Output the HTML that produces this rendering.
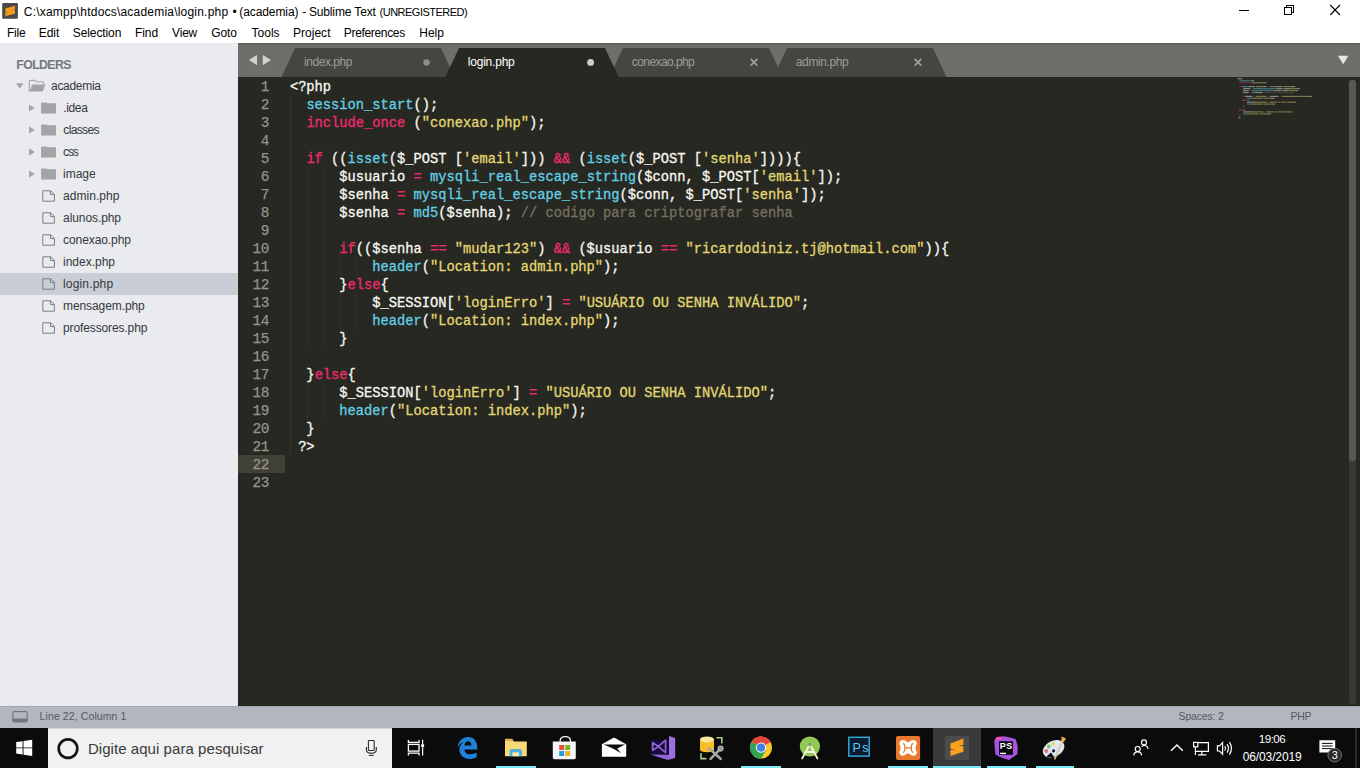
<!DOCTYPE html>
<html><head><meta charset="utf-8"><title>Sublime Text</title>
<style>
html,body{margin:0;padding:0;}
body{width:1360px;height:768px;overflow:hidden;position:relative;background:#ffffff;font-family:"Liberation Sans",sans-serif;}
.t{position:absolute;white-space:pre;}
.a{position:absolute;}
svg{position:absolute;overflow:visible;}

</style></head>
<body>
<div class="a" style="left:0;top:0;width:1360px;height:43px;background:#ffffff"></div>
<svg style="left:0;top:0" width="24" height="24" viewBox="0 0 24 24"><rect x="2.2" y="3.1" width="15.7" height="15.6" rx="0.8" fill="#4a4a48"/>
<path d="M15 5.7 L5.3 8.6 L5.3 11.7 L9.2 12.15 L5.3 12.6 L5.3 16.3 L15 13.4 L15 10.3 L11.2 9.85 L15 9.4 Z" fill="#f99c1c"/></svg>
<span class="t" style='left:23.82px;top:6px;font:400 12px/12px "Liberation Sans", sans-serif;color:#000000;letter-spacing:0.206px;'>C:\xampp\htdocs\academia\login.php</span>
<span class="t" style='left:232.40px;top:6px;font:400 12px/12px "Liberation Sans", sans-serif;color:#000000;letter-spacing:0.000px;'>•</span>
<span class="t" style='left:239.22px;top:6px;font:400 12px/12px "Liberation Sans", sans-serif;color:#000000;letter-spacing:-0.086px;'>(academia)</span>
<span class="t" style='left:302.30px;top:6px;font:400 12px/12px "Liberation Sans", sans-serif;color:#000000;letter-spacing:0.000px;'>-</span>
<span class="t" style='left:308.92px;top:6px;font:400 12px/12px "Liberation Sans", sans-serif;color:#000000;letter-spacing:-0.139px;'>Sublime Text</span>
<span class="t" style='left:379.56px;top:7px;font:400 11px/11px "Liberation Sans", sans-serif;color:#000000;letter-spacing:-0.504px;'>(UNREGISTERED)</span>
<svg style="left:1230px;top:0" width="130" height="24" viewBox="0 0 130 24" fill="none" stroke="#000" stroke-width="1">
<path shape-rendering="crispEdges" d="M9 10.5 H19"/>
<path shape-rendering="crispEdges" d="M54.5 7.5 h7 v7 h-7 Z M56.5 7.5 V5.5 h7 v7 h-2"/>
<path d="M100.2 5 L110 15 M110 5 L100.2 15" stroke-width="1.1"/>
</svg>
<span class="t" style='left:6.92px;top:27px;font:400 12px/12px "Liberation Sans", sans-serif;color:#000000;letter-spacing:-0.195px;'>File</span>
<span class="t" style='left:38.72px;top:27px;font:400 12px/12px "Liberation Sans", sans-serif;color:#000000;letter-spacing:-0.043px;'>Edit</span>
<span class="t" style='left:72.72px;top:27px;font:400 12px/12px "Liberation Sans", sans-serif;color:#000000;letter-spacing:-0.089px;'>Selection</span>
<span class="t" style='left:135.02px;top:27px;font:400 12px/12px "Liberation Sans", sans-serif;color:#000000;letter-spacing:-0.095px;'>Find</span>
<span class="t" style='left:172.12px;top:27px;font:400 12px/12px "Liberation Sans", sans-serif;color:#000000;letter-spacing:-0.212px;'>View</span>
<span class="t" style='left:211.32px;top:27px;font:400 12px/12px "Liberation Sans", sans-serif;color:#000000;letter-spacing:-0.119px;'>Goto</span>
<span class="t" style='left:251.62px;top:27px;font:400 12px/12px "Liberation Sans", sans-serif;color:#000000;letter-spacing:-0.014px;'>Tools</span>
<span class="t" style='left:293.02px;top:27px;font:400 12px/12px "Liberation Sans", sans-serif;color:#000000;letter-spacing:0.017px;'>Project</span>
<span class="t" style='left:343.82px;top:27px;font:400 12px/12px "Liberation Sans", sans-serif;color:#000000;letter-spacing:-0.334px;'>Preferences</span>
<span class="t" style='left:419.22px;top:27px;font:400 12px/12px "Liberation Sans", sans-serif;color:#000000;letter-spacing:0.024px;'>Help</span>
<div class="a" style="left:238px;top:43px;width:1122px;height:34px;background:#6e6f69"></div>
<div class="a" style="left:238px;top:43px;width:1122px;height:2px;background:#63645f"></div>
<svg style="left:238px;top:43px" width="1122" height="34" viewBox="0 0 1122 34">
<path d="M10.9 17 L19 11.9 L19 22.2 Z" fill="#d2d2ce"/>
<path d="M33 17 L24.8 11.9 L24.8 22.2 Z" fill="#d2d2ce"/>
<path d="M1100 12.8 L1110.4 12.8 L1105.2 21.2 Z" fill="#e6e6e4"/>

<path d="M43.5 34 L57 5 L203 5 L216.5 34 Z" fill="#454641"/>
<path d="M371.5 34 L385 5 L531 5 L544.5 34 Z" fill="#454641"/>
<path d="M535.5 34 L549 5 L695 5 L708.5 34 Z" fill="#454641"/>
<path d="M207.5 34 L221 5 L367 5 L380.5 34 Z" fill="#272822"/>
<circle cx="188.5" cy="19.4" r="3.2" fill="#8d8e8a"/>
<circle cx="352.6" cy="19.4" r="3.4" fill="#cfcfcb"/>
<path d="M512.7 16.0 L519.3 22.6 M519.3 16.0 L512.7 22.6" stroke="#9a9b97" stroke-width="1.8" fill="none"/>
<path d="M676.7 16.0 L683.3 22.6 M683.3 16.0 L676.7 22.6" stroke="#9a9b97" stroke-width="1.8" fill="none"/>
</svg>
<span class="t" style='left:304.02px;top:56px;font:400 12px/12px "Liberation Sans", sans-serif;color:#9c9d99;letter-spacing:-0.448px;'>index.php</span>
<span class="t" style='left:467.82px;top:56px;font:400 12px/12px "Liberation Sans", sans-serif;color:#ffffff;letter-spacing:-0.220px;'>login.php</span>
<span class="t" style='left:631.82px;top:56px;font:400 12px/12px "Liberation Sans", sans-serif;color:#9c9d99;letter-spacing:-0.577px;'>conexao.php</span>
<span class="t" style='left:795.82px;top:56px;font:400 12px/12px "Liberation Sans", sans-serif;color:#9c9d99;letter-spacing:-0.386px;'>admin.php</span>
<div class="a" style="left:0;top:706px;width:1360px;height:22px;background:#b2b6bf"></div>
<div class="a" style="left:0;top:706px;width:1360px;height:1px;background:#a4a8b1"></div>
<svg style="left:11px;top:710px" width="18" height="14" viewBox="0 0 18 14">
<rect x="1.8" y="1.6" width="14.4" height="10.4" rx="1.6" fill="none" stroke="#70747d" stroke-width="1.2"/>
<path d="M1.8 8.6 H16.2 V10.6 Q16.2 12 14.8 12 H3.2 Q1.8 12 1.8 10.6 Z" fill="#70747d"/></svg>
<span class="t" style='left:39.58px;top:711px;font:400 10.5px/10.5px "Liberation Sans", sans-serif;color:#555860;letter-spacing:0.100px;'>Line 22, Column 1</span>
<span class="t" style='left:1178.58px;top:711px;font:400 10.5px/10.5px "Liberation Sans", sans-serif;color:#555860;letter-spacing:-0.170px;'>Spaces: 2</span>
<span class="t" style='left:1290.58px;top:711px;font:400 10.5px/10.5px "Liberation Sans", sans-serif;color:#555860;letter-spacing:-0.377px;'>PHP</span>
<div class="a" style="left:0;top:43px;width:238px;height:663px;background:#e9ebef"></div>
<div class="a" style="left:0;top:273px;width:238px;height:22px;background:#c9cdd6"></div>
<span class="t" style='left:16.30px;top:59px;font:700 12.4px/12.4px "Liberation Sans", sans-serif;color:#74777e;letter-spacing:-0.669px;'>FOLDERS</span>
<svg style="left:0;top:43px" width="238" height="663" viewBox="0 43 238 663">
<path d="M16 83.2 L23.6 83.2 L19.8 88.8 Z" fill="#a2a4a7"/>
<path d="M29.3 91.4 V82 Q29.3 80.4 30.8 80.4 H34.6 L36 81.8 H42.4 Q43.6 81.8 43.6 83 V84" fill="none" stroke="#a2a4a7" stroke-width="1.1"/>
<path d="M29.6 91.6 L32.2 84.4 H45.4 L42.8 91.6 Z" fill="#a2a4a7"/>
<path d="M29 104.4 L34.9 108 L29 111.6 Z" fill="#a2a4a7"/><path d="M41.1 102.4 H46.4 L47.4 103.2 H56 V113.6 H41.1 Z" fill="#a2a4a7"/>
<path d="M29 126.4 L34.9 130 L29 133.6 Z" fill="#a2a4a7"/><path d="M41.1 124.4 H46.4 L47.4 125.2 H56 V135.6 H41.1 Z" fill="#a2a4a7"/>
<path d="M29 148.4 L34.9 152 L29 155.6 Z" fill="#a2a4a7"/><path d="M41.1 146.4 H46.4 L47.4 147.2 H56 V157.6 H41.1 Z" fill="#a2a4a7"/>
<path d="M29 170.4 L34.9 174 L29 177.6 Z" fill="#a2a4a7"/><path d="M41.1 168.4 H46.4 L47.4 169.2 H56 V179.6 H41.1 Z" fill="#a2a4a7"/>
<path d="M42.8 190.8 H50.6 L54.4 194.4 V201.2 H42.8 Z M50.4 190.8 V194.6 H54.4" fill="none" stroke="#7c7e82" stroke-width="1" stroke-linejoin="round"/>
<path d="M42.8 212.8 H50.6 L54.4 216.4 V223.2 H42.8 Z M50.4 212.8 V216.6 H54.4" fill="none" stroke="#7c7e82" stroke-width="1" stroke-linejoin="round"/>
<path d="M42.8 234.8 H50.6 L54.4 238.4 V245.2 H42.8 Z M50.4 234.8 V238.6 H54.4" fill="none" stroke="#7c7e82" stroke-width="1" stroke-linejoin="round"/>
<path d="M42.8 256.8 H50.6 L54.4 260.4 V267.2 H42.8 Z M50.4 256.8 V260.6 H54.4" fill="none" stroke="#7c7e82" stroke-width="1" stroke-linejoin="round"/>
<path d="M42.8 278.8 H50.6 L54.4 282.4 V289.2 H42.8 Z M50.4 278.8 V282.6 H54.4" fill="none" stroke="#7c7e82" stroke-width="1" stroke-linejoin="round"/>
<path d="M42.8 300.8 H50.6 L54.4 304.4 V311.2 H42.8 Z M50.4 300.8 V304.6 H54.4" fill="none" stroke="#7c7e82" stroke-width="1" stroke-linejoin="round"/>
<path d="M42.8 322.8 H50.6 L54.4 326.4 V333.2 H42.8 Z M50.4 322.8 V326.6 H54.4" fill="none" stroke="#7c7e82" stroke-width="1" stroke-linejoin="round"/>
</svg>
<span class="t" style='left:51.02px;top:80px;font:400 12px/12px "Liberation Sans", sans-serif;color:#35383d;letter-spacing:-0.296px;'>academia</span>
<span class="t" style='left:63.27px;top:102px;font:400 12px/12px "Liberation Sans", sans-serif;color:#35383d;letter-spacing:-0.355px;'>.idea</span>
<span class="t" style='left:63.27px;top:124px;font:400 12px/12px "Liberation Sans", sans-serif;color:#35383d;letter-spacing:-0.634px;'>classes</span>
<span class="t" style='left:63.12px;top:146px;font:400 12px/12px "Liberation Sans", sans-serif;color:#35383d;letter-spacing:-1.220px;'>css</span>
<span class="t" style='left:63.12px;top:168px;font:400 12px/12px "Liberation Sans", sans-serif;color:#35383d;letter-spacing:-0.032px;'>image</span>
<span class="t" style='left:63.12px;top:190px;font:400 12px/12px "Liberation Sans", sans-serif;color:#35383d;letter-spacing:0.039px;'>admin.php</span>
<span class="t" style='left:63.12px;top:212px;font:400 12px/12px "Liberation Sans", sans-serif;color:#35383d;letter-spacing:-0.095px;'>alunos.php</span>
<span class="t" style='left:63.02px;top:234px;font:400 12px/12px "Liberation Sans", sans-serif;color:#35383d;letter-spacing:-0.077px;'>conexao.php</span>
<span class="t" style='left:63.02px;top:256px;font:400 12px/12px "Liberation Sans", sans-serif;color:#35383d;letter-spacing:-0.011px;'>index.php</span>
<span class="t" style='left:63.02px;top:278px;font:400 12px/12px "Liberation Sans", sans-serif;color:#35383d;letter-spacing:0.168px;'>login.php</span>
<span class="t" style='left:63.02px;top:300px;font:400 12px/12px "Liberation Sans", sans-serif;color:#35383d;letter-spacing:-0.087px;'>mensagem.php</span>
<span class="t" style='left:63.02px;top:322px;font:400 12px/12px "Liberation Sans", sans-serif;color:#35383d;letter-spacing:-0.122px;'>professores.php</span>
<div class="a" style="left:238px;top:77px;width:1122px;height:629px;background:#272822"></div>
<div class="a" style="left:238px;top:455px;width:47px;height:18px;background:#424136"></div>
<div class="a" style="left:290.4px;top:95px;width:1px;height:360px;background:#32332d"></div>
<div class="a" style="left:306.9px;top:167px;width:1px;height:180px;background:#32332d"></div>
<div class="a" style="left:306.9px;top:383px;width:1px;height:36px;background:#32332d"></div>
<div class="a" style="left:323.4px;top:167px;width:1px;height:180px;background:#32332d"></div>
<div class="a" style="left:323.4px;top:383px;width:1px;height:36px;background:#32332d"></div>
<div class="a" style="left:339.9px;top:257px;width:1px;height:18px;background:#32332d"></div>
<div class="a" style="left:356.4px;top:257px;width:1px;height:18px;background:#32332d"></div>
<div class="a" style="left:339.9px;top:293px;width:1px;height:36px;background:#32332d"></div>
<div class="a" style="left:356.4px;top:293px;width:1px;height:36px;background:#32332d"></div>
<div class="a" id="code" style='left:289.9px;top:79px;font:13.745px/18px "Liberation Mono", monospace;white-space:pre;color:#f8f8f2;-webkit-text-stroke:0.3px'>&lt;?php
  <span style="color:#62cfe4">session_start</span>();
  <span style="color:#ee2a6e">include_once</span> (<span style="color:#e2d772">"conexao.php"</span>);

  <span style="color:#ee2a6e">if</span> ((<span style="color:#62cfe4">isset</span>($_POST [<span style="color:#e2d772">'email'</span>])) <span style="color:#ee2a6e">&amp;&amp;</span> (<span style="color:#62cfe4">isset</span>($_POST [<span style="color:#e2d772">'senha'</span>]))){
      $usuario <span style="color:#ee2a6e">=</span> <span style="color:#62cfe4">mysqli_real_escape_string</span>($conn, $_POST[<span style="color:#e2d772">'email'</span>]);
      $senha <span style="color:#ee2a6e">=</span> <span style="color:#62cfe4">mysqli_real_escape_string</span>($conn, $_POST[<span style="color:#e2d772">'senha'</span>]);
      $senha <span style="color:#ee2a6e">=</span> <span style="color:#62cfe4">md5</span>($senha); <span style="color:#75715e">// codigo para criptografar senha</span>

      <span style="color:#ee2a6e">if</span>(($senha <span style="color:#ee2a6e">==</span> <span style="color:#e2d772">"mudar123"</span>) <span style="color:#ee2a6e">&amp;&amp;</span> ($usuario <span style="color:#ee2a6e">==</span> <span style="color:#e2d772">"ricardodiniz.tj@hotmail.com"</span>)){
          <span style="color:#62cfe4">header</span>(<span style="color:#e2d772">"Location: admin.php"</span>);
      }<span style="color:#ee2a6e">else</span>{
          $_SESSION[<span style="color:#e2d772">'loginErro'</span>] <span style="color:#ee2a6e">=</span> <span style="color:#e2d772">"USUÁRIO OU SENHA INVÁLIDO"</span>;
          <span style="color:#62cfe4">header</span>(<span style="color:#e2d772">"Location: index.php"</span>);
      }

  }<span style="color:#ee2a6e">else</span>{
      $_SESSION[<span style="color:#e2d772">'loginErro'</span>] <span style="color:#ee2a6e">=</span> <span style="color:#e2d772">"USUÁRIO OU SENHA INVÁLIDO"</span>;
      <span style="color:#62cfe4">header</span>(<span style="color:#e2d772">"Location: index.php"</span>);
  }
 ?&gt;

</div>
<div class="a" id="nums" style='left:238px;top:78px;width:31.1px;text-align:right;font:14.4px/18px "Liberation Mono", monospace;letter-spacing:-0.393px;white-space:pre;color:#93948e;-webkit-text-stroke:0.25px'>1
2
3
4
5
6
7
8
9
10
11
12
13
14
15
16
17
18
19
20
21
22
23</div>
<svg style="left:0;top:0" width="1360" height="140" viewBox="0 0 1360 140" opacity="0.75"><rect x="1237.5" y="78.2" width="4.7" height="1.2" fill="#f8f8f2" opacity="0.6"/><rect x="1239.4" y="80.2" width="12.1" height="1.2" fill="#62cfe4" opacity="0.6"/><rect x="1251.5" y="80.2" width="2.8" height="1.2" fill="#f8f8f2" opacity="0.6"/><rect x="1239.4" y="82.1" width="11.2" height="1.2" fill="#ee2a6e" opacity="0.6"/><rect x="1251.5" y="82.1" width="0.9" height="1.2" fill="#f8f8f2" opacity="0.6"/><rect x="1252.4" y="82.1" width="12.1" height="1.2" fill="#e2d772" opacity="0.6"/><rect x="1264.5" y="82.1" width="1.9" height="1.2" fill="#f8f8f2" opacity="0.6"/><rect x="1239.4" y="86.0" width="1.9" height="1.2" fill="#ee2a6e" opacity="0.6"/><rect x="1242.2" y="86.0" width="1.9" height="1.2" fill="#f8f8f2" opacity="0.6"/><rect x="1244.0" y="86.0" width="4.7" height="1.2" fill="#62cfe4" opacity="0.6"/><rect x="1248.7" y="86.0" width="6.5" height="1.2" fill="#f8f8f2" opacity="0.6"/><rect x="1256.1" y="86.0" width="0.9" height="1.2" fill="#f8f8f2" opacity="0.6"/><rect x="1257.0" y="86.0" width="6.5" height="1.2" fill="#e2d772" opacity="0.6"/><rect x="1263.5" y="86.0" width="2.8" height="1.2" fill="#f8f8f2" opacity="0.6"/><rect x="1267.3" y="86.0" width="1.9" height="1.2" fill="#ee2a6e" opacity="0.6"/><rect x="1270.0" y="86.0" width="0.9" height="1.2" fill="#f8f8f2" opacity="0.6"/><rect x="1271.0" y="86.0" width="4.7" height="1.2" fill="#62cfe4" opacity="0.6"/><rect x="1275.6" y="86.0" width="6.5" height="1.2" fill="#f8f8f2" opacity="0.6"/><rect x="1283.1" y="86.0" width="0.9" height="1.2" fill="#f8f8f2" opacity="0.6"/><rect x="1284.0" y="86.0" width="6.5" height="1.2" fill="#e2d772" opacity="0.6"/><rect x="1290.5" y="86.0" width="4.7" height="1.2" fill="#f8f8f2" opacity="0.6"/><rect x="1243.1" y="88.0" width="7.4" height="1.2" fill="#f8f8f2" opacity="0.6"/><rect x="1251.5" y="88.0" width="0.9" height="1.2" fill="#ee2a6e" opacity="0.6"/><rect x="1253.3" y="88.0" width="23.2" height="1.2" fill="#62cfe4" opacity="0.6"/><rect x="1276.6" y="88.0" width="6.5" height="1.2" fill="#f8f8f2" opacity="0.6"/><rect x="1284.0" y="88.0" width="6.5" height="1.2" fill="#f8f8f2" opacity="0.6"/><rect x="1290.5" y="88.0" width="6.5" height="1.2" fill="#e2d772" opacity="0.6"/><rect x="1297.0" y="88.0" width="2.8" height="1.2" fill="#f8f8f2" opacity="0.6"/><rect x="1243.1" y="89.9" width="5.6" height="1.2" fill="#f8f8f2" opacity="0.6"/><rect x="1249.6" y="89.9" width="0.9" height="1.2" fill="#ee2a6e" opacity="0.6"/><rect x="1251.5" y="89.9" width="23.2" height="1.2" fill="#62cfe4" opacity="0.6"/><rect x="1274.7" y="89.9" width="6.5" height="1.2" fill="#f8f8f2" opacity="0.6"/><rect x="1282.1" y="89.9" width="6.5" height="1.2" fill="#f8f8f2" opacity="0.6"/><rect x="1288.7" y="89.9" width="6.5" height="1.2" fill="#e2d772" opacity="0.6"/><rect x="1295.2" y="89.9" width="2.8" height="1.2" fill="#f8f8f2" opacity="0.6"/><rect x="1243.1" y="91.9" width="5.6" height="1.2" fill="#f8f8f2" opacity="0.6"/><rect x="1249.6" y="91.9" width="0.9" height="1.2" fill="#ee2a6e" opacity="0.6"/><rect x="1251.5" y="91.9" width="2.8" height="1.2" fill="#62cfe4" opacity="0.6"/><rect x="1254.2" y="91.9" width="8.4" height="1.2" fill="#f8f8f2" opacity="0.6"/><rect x="1263.5" y="91.9" width="1.9" height="1.2" fill="#75715e" opacity="0.6"/><rect x="1266.3" y="91.9" width="5.6" height="1.2" fill="#75715e" opacity="0.6"/><rect x="1272.8" y="91.9" width="3.7" height="1.2" fill="#75715e" opacity="0.6"/><rect x="1277.5" y="91.9" width="11.2" height="1.2" fill="#75715e" opacity="0.6"/><rect x="1289.6" y="91.9" width="4.7" height="1.2" fill="#75715e" opacity="0.6"/><rect x="1243.1" y="95.8" width="1.9" height="1.2" fill="#ee2a6e" opacity="0.6"/><rect x="1244.9" y="95.8" width="7.4" height="1.2" fill="#f8f8f2" opacity="0.6"/><rect x="1253.3" y="95.8" width="1.9" height="1.2" fill="#ee2a6e" opacity="0.6"/><rect x="1256.1" y="95.8" width="9.3" height="1.2" fill="#e2d772" opacity="0.6"/><rect x="1265.4" y="95.8" width="0.9" height="1.2" fill="#f8f8f2" opacity="0.6"/><rect x="1267.3" y="95.8" width="1.9" height="1.2" fill="#ee2a6e" opacity="0.6"/><rect x="1270.0" y="95.8" width="8.4" height="1.2" fill="#f8f8f2" opacity="0.6"/><rect x="1279.3" y="95.8" width="1.9" height="1.2" fill="#ee2a6e" opacity="0.6"/><rect x="1282.1" y="95.8" width="27.0" height="1.2" fill="#e2d772" opacity="0.6"/><rect x="1309.1" y="95.8" width="2.8" height="1.2" fill="#f8f8f2" opacity="0.6"/><rect x="1246.8" y="97.7" width="5.6" height="1.2" fill="#62cfe4" opacity="0.6"/><rect x="1252.4" y="97.7" width="0.9" height="1.2" fill="#f8f8f2" opacity="0.6"/><rect x="1253.3" y="97.7" width="9.3" height="1.2" fill="#e2d772" opacity="0.6"/><rect x="1263.5" y="97.7" width="9.3" height="1.2" fill="#e2d772" opacity="0.6"/><rect x="1272.8" y="97.7" width="1.9" height="1.2" fill="#f8f8f2" opacity="0.6"/><rect x="1243.1" y="99.7" width="0.9" height="1.2" fill="#f8f8f2" opacity="0.6"/><rect x="1244.0" y="99.7" width="3.7" height="1.2" fill="#ee2a6e" opacity="0.6"/><rect x="1247.7" y="99.7" width="0.9" height="1.2" fill="#f8f8f2" opacity="0.6"/><rect x="1246.8" y="101.6" width="9.3" height="1.2" fill="#f8f8f2" opacity="0.6"/><rect x="1256.1" y="101.6" width="10.2" height="1.2" fill="#e2d772" opacity="0.6"/><rect x="1266.3" y="101.6" width="0.9" height="1.2" fill="#f8f8f2" opacity="0.6"/><rect x="1268.2" y="101.6" width="0.9" height="1.2" fill="#ee2a6e" opacity="0.6"/><rect x="1270.0" y="101.6" width="7.4" height="1.2" fill="#e2d772" opacity="0.6"/><rect x="1278.4" y="101.6" width="1.9" height="1.2" fill="#e2d772" opacity="0.6"/><rect x="1281.2" y="101.6" width="4.7" height="1.2" fill="#e2d772" opacity="0.6"/><rect x="1286.8" y="101.6" width="8.4" height="1.2" fill="#e2d772" opacity="0.6"/><rect x="1295.2" y="101.6" width="0.9" height="1.2" fill="#f8f8f2" opacity="0.6"/><rect x="1246.8" y="103.5" width="5.6" height="1.2" fill="#62cfe4" opacity="0.6"/><rect x="1252.4" y="103.5" width="0.9" height="1.2" fill="#f8f8f2" opacity="0.6"/><rect x="1253.3" y="103.5" width="9.3" height="1.2" fill="#e2d772" opacity="0.6"/><rect x="1263.5" y="103.5" width="9.3" height="1.2" fill="#e2d772" opacity="0.6"/><rect x="1272.8" y="103.5" width="1.9" height="1.2" fill="#f8f8f2" opacity="0.6"/><rect x="1243.1" y="105.5" width="0.9" height="1.2" fill="#f8f8f2" opacity="0.6"/><rect x="1239.4" y="109.4" width="0.9" height="1.2" fill="#f8f8f2" opacity="0.6"/><rect x="1240.3" y="109.4" width="3.7" height="1.2" fill="#ee2a6e" opacity="0.6"/><rect x="1244.0" y="109.4" width="0.9" height="1.2" fill="#f8f8f2" opacity="0.6"/><rect x="1243.1" y="111.3" width="9.3" height="1.2" fill="#f8f8f2" opacity="0.6"/><rect x="1252.4" y="111.3" width="10.2" height="1.2" fill="#e2d772" opacity="0.6"/><rect x="1262.6" y="111.3" width="0.9" height="1.2" fill="#f8f8f2" opacity="0.6"/><rect x="1264.5" y="111.3" width="0.9" height="1.2" fill="#ee2a6e" opacity="0.6"/><rect x="1266.3" y="111.3" width="7.4" height="1.2" fill="#e2d772" opacity="0.6"/><rect x="1274.7" y="111.3" width="1.9" height="1.2" fill="#e2d772" opacity="0.6"/><rect x="1277.5" y="111.3" width="4.7" height="1.2" fill="#e2d772" opacity="0.6"/><rect x="1283.1" y="111.3" width="8.4" height="1.2" fill="#e2d772" opacity="0.6"/><rect x="1291.4" y="111.3" width="0.9" height="1.2" fill="#f8f8f2" opacity="0.6"/><rect x="1243.1" y="113.3" width="5.6" height="1.2" fill="#62cfe4" opacity="0.6"/><rect x="1248.7" y="113.3" width="0.9" height="1.2" fill="#f8f8f2" opacity="0.6"/><rect x="1249.6" y="113.3" width="9.3" height="1.2" fill="#e2d772" opacity="0.6"/><rect x="1259.8" y="113.3" width="9.3" height="1.2" fill="#e2d772" opacity="0.6"/><rect x="1269.1" y="113.3" width="1.9" height="1.2" fill="#f8f8f2" opacity="0.6"/><rect x="1239.4" y="115.2" width="0.9" height="1.2" fill="#f8f8f2" opacity="0.6"/><rect x="1238.4" y="117.2" width="1.9" height="1.2" fill="#f8f8f2" opacity="0.6"/></svg>
<div class="a" style="left:1349px;top:80px;width:7px;height:624px;background:#383933;border-radius:3px"></div>
<div class="a" style="left:1349px;top:80px;width:7px;height:381px;background:#575853;border-radius:3px"></div>
<div class="a" style="left:0;top:728px;width:1360px;height:40px;background:#0b0b0b"></div>
<div class="a" style="left:48px;top:728px;width:344px;height:40px;background:#f1f1f1"></div>
<div class="a" style="left:48px;top:728px;width:344px;height:1px;background:#d0d2d6"></div>
<div class="a" style="left:933px;top:728px;width:48px;height:40px;background:#3a3a3a"></div>
<div class="a" style="left:496px;top:766px;width:40px;height:2px;background:#7be7f5"></div>
<div class="a" style="left:741px;top:766px;width:40px;height:2px;background:#7be7f5"></div>
<div class="a" style="left:888px;top:766px;width:40px;height:2px;background:#7be7f5"></div>
<div class="a" style="left:933px;top:766px;width:48px;height:2px;background:#7be7f5"></div>
<div class="a" style="left:986.5px;top:766px;width:39.5px;height:2px;background:#7be7f5"></div>
<div class="a" style="left:1035.5px;top:766px;width:38.5px;height:2px;background:#7be7f5"></div>
<span class="t" style='left:87.90px;top:741px;font:400 15px/15px "Liberation Sans", sans-serif;color:#3a3a3a;letter-spacing:0.057px;'>Digite aqui para pesquisar</span>
<svg style="left:0;top:728px" width="1360" height="40" viewBox="0 728 1360 40">
<path d="M16.2 742.1 L22.6 741.2 V747.4 H16.2 Z M23.5 741.1 L32.2 739.8 V747.4 H23.5 Z M16.2 748.3 H22.6 V754.5 L16.2 753.6 Z M23.5 748.3 H32.2 V756 L23.5 754.7 Z" fill="#ffffff"/>
<circle cx="68" cy="748.6" r="9.3" fill="none" stroke="#141414" stroke-width="2.7"/>
<rect x="368.4" y="740.5" width="5.8" height="10" rx="0.8" fill="none" stroke="#2b2b2b" stroke-width="1.1"/>
<path d="M366.4 747 V749.6 Q366.4 753.4 371.3 753.4 Q376.3 753.4 376.3 749.6 V747" fill="none" stroke="#2b2b2b" stroke-width="1.1"/>
<path d="M368.8 755.4 H373.8" stroke="#2b2b2b" stroke-width="1"/>
<g fill="none" stroke="#ffffff" stroke-width="1.3"><rect x="408.4" y="744.4" width="10.6" height="6.7"/><path d="M408.4 740 V742.4 H419 V740 M408.4 755.4 V753.2 H419 V755.4"/><path d="M422.6 739.8 V744 M422.6 747.6 V755.4" stroke-width="1.2"/></g><rect x="421.2" y="744.2" width="2.9" height="3" fill="#ffffff"/>
<path d="M457.6 747.6 C458 741.2 462.6 736.9 468 736.9 C474.2 736.9 477.2 741.8 477.2 747.2 V749.4 H464.4 C464.7 752.6 467.2 754.3 470.6 754.3 C472.9 754.3 474.9 753.7 476.6 752.6 V757.2 C474.6 758.4 472.2 759 469.4 759 C463.4 759 459.4 754.8 459.4 749.6 C459.4 746.2 461.2 743.5 463.8 741.9 C461 742.6 458.8 744.6 457.6 747.6 Z M464.5 745.6 H471.4 C471.4 742.9 470 741.2 467.9 741.2 C465.9 741.2 464.7 743 464.5 745.6 Z" fill="#1e82da"/>
<path d="M505 740.2 H512.4 L514 741.6 H526.8 V756.3 H505 Z" fill="#f8d877"/><path d="M505 738.8 H512 L513.8 740.6 H505 Z" fill="#e8b64c"/><path d="M509.6 756.3 V751.2 Q509.6 749 511.8 749 H519.8 Q522 749 522 751.2 V756.3 H519 V752.6 H512.6 V756.3 Z" fill="#4fb2e0"/><rect x="512.6" y="752.6" width="6.4" height="3.7" fill="#f6e9ae"/>
<path d="M560.2 742 V740.6 Q560.2 736.6 565.4 736.6 Q570.4 736.6 570.4 740.6 V742" fill="none" stroke="#f4f4f4" stroke-width="1.3"/><path d="M552.8 741.6 H575.8 V757.4 Q575.8 759.2 574 759.2 H554.6 Q552.8 759.2 552.8 757.4 Z" fill="#f5f5f5"/><rect x="559.2" y="745" width="5" height="5" fill="#e15535"/><rect x="565.2" y="745" width="5" height="5" fill="#7db61c"/><rect x="559.2" y="751" width="5" height="5" fill="#1f9fe2"/><rect x="565.2" y="751" width="5" height="5" fill="#f3b11f"/>
<path d="M601.9 744.2 L614 737.4 L626.2 744.2 V756.8 H601.9 Z" fill="#ffffff"/><path d="M603.6 744.6 H625.2 L617.2 748.6 L621 753.2 L613.4 748.8 Z" fill="#0b0b0b"/>
<path d="M669 736 L675.2 738 V757.8 L669 759.8 Z" fill="#9a72de"/><path d="M650 754.2 L669 754.6 V759.8 L666 759.6 Z" fill="#8f67d4"/><path d="M651 740 H669 V754.6 L651 754.2 Z" fill="#190a3e"/><path d="M652.6 742.6 L658.4 746.4 L665.6 740.2 V752.6 L658.4 746.6 L652.6 750.2 Z" fill="none" stroke="#8d65d2" stroke-width="1.7" stroke-linejoin="round"/>
<path d="M700 739.4 V749.6 Q700 752.2 707 752.2 Q714 752.2 714 749.6 V739.4 Z" fill="#f6bd27"/><ellipse cx="707" cy="739.4" rx="7" ry="3" fill="#fbe79a"/><path d="M716.4 737.8 H721.8 V743.4" fill="none" stroke="#a9cb8c" stroke-width="1.6"/><path d="M701 753.2 V758.6 H706.4" fill="none" stroke="#a9cb8c" stroke-width="1.6"/><path d="M709.4 748.6 L720.6 758.8 M720.8 748.4 L710.6 758.8" stroke="#a8a8a8" stroke-width="2.6" stroke-linecap="round"/><circle cx="720.6" cy="748.6" r="2.3" fill="none" stroke="#b6b6b6" stroke-width="1.5"/><path d="M707.6 750 L710.4 747.6" stroke="#a8a8a8" stroke-width="2"/>
<circle cx="761" cy="747.6" r="11" fill="#f7c82e"/><path d="M761 747.6 L751.5 742.1 A11 11 0 0 1 770.5 742.1 Z" fill="#e1453b"/><path d="M761 736.6 A11 11 0 0 1 770.53 742.1 L761 742.1 Z" fill="#e1453b"/><path d="M751.47 742.1 A11 11 0 0 0 761 758.6 L765.8 750.4 L761 747.6 Z" fill="#2ea553"/><path d="M751.47 742.1 L756.3 750.4 L761 758.6 A11 11 0 0 1 751.47 742.1 Z" fill="#2ea553"/><path d="M751.47 742.1 A11 11 0 0 1 770.53 742.1 L761 742.1 Z" fill="#e1453b"/><circle cx="761" cy="747.6" r="5.2" fill="#f2f6fa"/><circle cx="761" cy="747.6" r="4.1" fill="#3f80e2"/>
<circle cx="809.9" cy="746.5" r="10.1" fill="#92c854"/><path d="M809.6 744.6 L802.2 758.4 M810 744.6 L817.4 758.4 M805.4 752 H814.2" stroke="#f1f8e2" stroke-width="1.9" fill="none" stroke-linecap="round"/><circle cx="809.8" cy="744.6" r="1.9" fill="#8a9b72"/>
<rect x="848.8" y="737.3" width="20.4" height="18.8" fill="#0a1b30" stroke="#2fa6d6" stroke-width="1.5"/>
<rect x="896" y="736" width="24.1" height="24.1" rx="2" fill="#e9792c"/><path d="M903 740 C905.4 740 906.4 742.2 908.1 742.2 C909.8 742.2 910.8 740 913.2 740 C916.2 740 917.6 743 916.2 745.4 C915.4 746.8 915.4 749 916.2 750.4 C917.6 752.8 916.2 755.8 913.2 755.8 C910.8 755.8 909.8 753.6 908.1 753.6 C906.4 753.6 905.4 755.8 903 755.8 C900 755.8 898.6 752.8 900 750.4 C900.8 749 900.8 746.8 900 745.4 C898.6 743 900 740 903 740 Z" fill="#fffdf8"/><path d="M903.6 743.6 Q905.6 745.4 904.8 747.9 Q905.6 750.4 903.6 752.2 M912.6 743.6 Q910.6 745.4 911.4 747.9 Q910.6 750.4 912.6 752.2 M904.8 747.9 H911.4" fill="none" stroke="#e07a34" stroke-width="1.3" stroke-linecap="round"/>
<rect x="945" y="736" width="24" height="24" rx="1.2" fill="#4b4b4b"/><path d="M963.4 738.6 L950.4 743.4 L950.4 748.7 L955.5 749.4 L950.4 749.9 L950.4 756.1 L963.4 751.8 L963.4 746.2 L958.5 745.6 L963.4 745 Z" fill="#faa21b"/>
<path d="M996.5 737 L1006 736.4 L1015.6 739 L1017.7 746 L1017.5 754 L1009 760 L1001 757.6 L995.4 754.4 L994.2 741 Z" fill="#a552e0"/><path d="M996.5 737 L1004.5 736.5 L1001 739.6 L995 741 Z" fill="#e84fb4"/><rect x="999" y="741.3" width="14" height="13.5" fill="#0a0a10"/><rect x="1000" y="752.7" width="6" height="1.4" fill="#ffffff"/>
<g transform="rotate(-28 1053.6 748.8)"><ellipse cx="1053.6" cy="748.8" rx="11.4" ry="8" fill="#dce9f4"/><path d="M1043.5 752.4 L1049.6 750.8 L1050.4 757.4 Z" fill="#0b0b0b"/><circle cx="1050.4" cy="744.6" r="2" fill="#8fc56f"/><circle cx="1055.6" cy="744.2" r="2" fill="#f2d46c"/><circle cx="1046" cy="747.4" r="2" fill="#e17c7c"/><circle cx="1052.6" cy="750.6" r="1.5" fill="#111"/></g><path d="M1063 739.4 L1054.6 759.4" stroke="#e8c292" stroke-width="1.6"/><path d="M1061.4 736.6 L1066 738.4 L1063.4 742.4 L1061.6 741.6 Z" fill="#f0ae5c"/>
<g fill="none" stroke="#ffffff" stroke-width="1.2"><circle cx="1144" cy="742.4" r="2.5"/><path d="M1141.6 746.4 Q1144 744.8 1146.4 746 Q1148 747 1148 749"/><circle cx="1137.7" cy="749" r="2.5"/><path d="M1133.8 755.4 Q1134 751.8 1137.7 751.8 Q1141.4 751.8 1141.6 755.4"/></g>
<path d="M1171 750.8 L1176.9 745 L1182.8 750.8" fill="none" stroke="#ffffff" stroke-width="1.4"/>
<g fill="none" stroke="#ffffff" stroke-width="1.2"><path d="M1198 742.6 H1208.4 V751.4 H1195.4 V747"/><rect x="1193.6" y="742.4" width="4.2" height="4.4"/><path d="M1195.4 751.4 V755 M1201.8 751.4 V754.6 M1198 754.8 H1206.4"/></g>
<g fill="none" stroke="#ffffff" stroke-width="1.2"><path d="M1217.4 745.8 H1219.6 L1222.6 742.6 V754.2 L1219.6 751 H1217.4 Z"/><path d="M1224.8 746.2 Q1226.4 748.4 1224.8 750.6 M1227 744.2 Q1230 748.4 1227 752.6 M1229.4 742.2 Q1233.6 748.4 1229.4 754.6"/></g>
<path d="M1319.4 740.2 H1335.2 V752.4 H1331.8 V755.6 L1328 752.4 H1319.4 Z" fill="#ffffff"/><path d="M1322 743.4 H1332.6 M1322 746 H1332.6 M1322 748.6 H1332.6" stroke="#0b0b0b" stroke-width="1"/><circle cx="1334.7" cy="755.2" r="6.8" fill="#2a2a2a" stroke="#707070" stroke-width="1"/>
<rect x="1355.5" y="728" width="1" height="40" fill="#4c4c4c"/>
</svg>
<span class="t" style='left:852.50px;top:742px;font:400 12.5px/12.5px "Liberation Sans", sans-serif;color:#5cc8ee;letter-spacing:1.406px;'>Ps</span>
<span class="t" style='left:999.64px;top:742px;font:700 9px/9px "Liberation Sans", sans-serif;color:#ffffff;letter-spacing:0.704px;'>PS</span>
<span class="t" style='left:1258.74px;top:733px;font:400 11.6px/11.6px "Liberation Sans", sans-serif;color:#ffffff;letter-spacing:-0.497px;'>19:06</span>
<span class="t" style='left:1242.72px;top:751px;font:400 12px/12px "Liberation Sans", sans-serif;color:#ffffff;letter-spacing:-0.122px;'>06/03/2019</span>
<span class="t" style='left:1331.80px;top:750px;font:400 11px/11px "Liberation Sans", sans-serif;color:#ffffff;letter-spacing:0.000px;'>3</span>
</body></html>
